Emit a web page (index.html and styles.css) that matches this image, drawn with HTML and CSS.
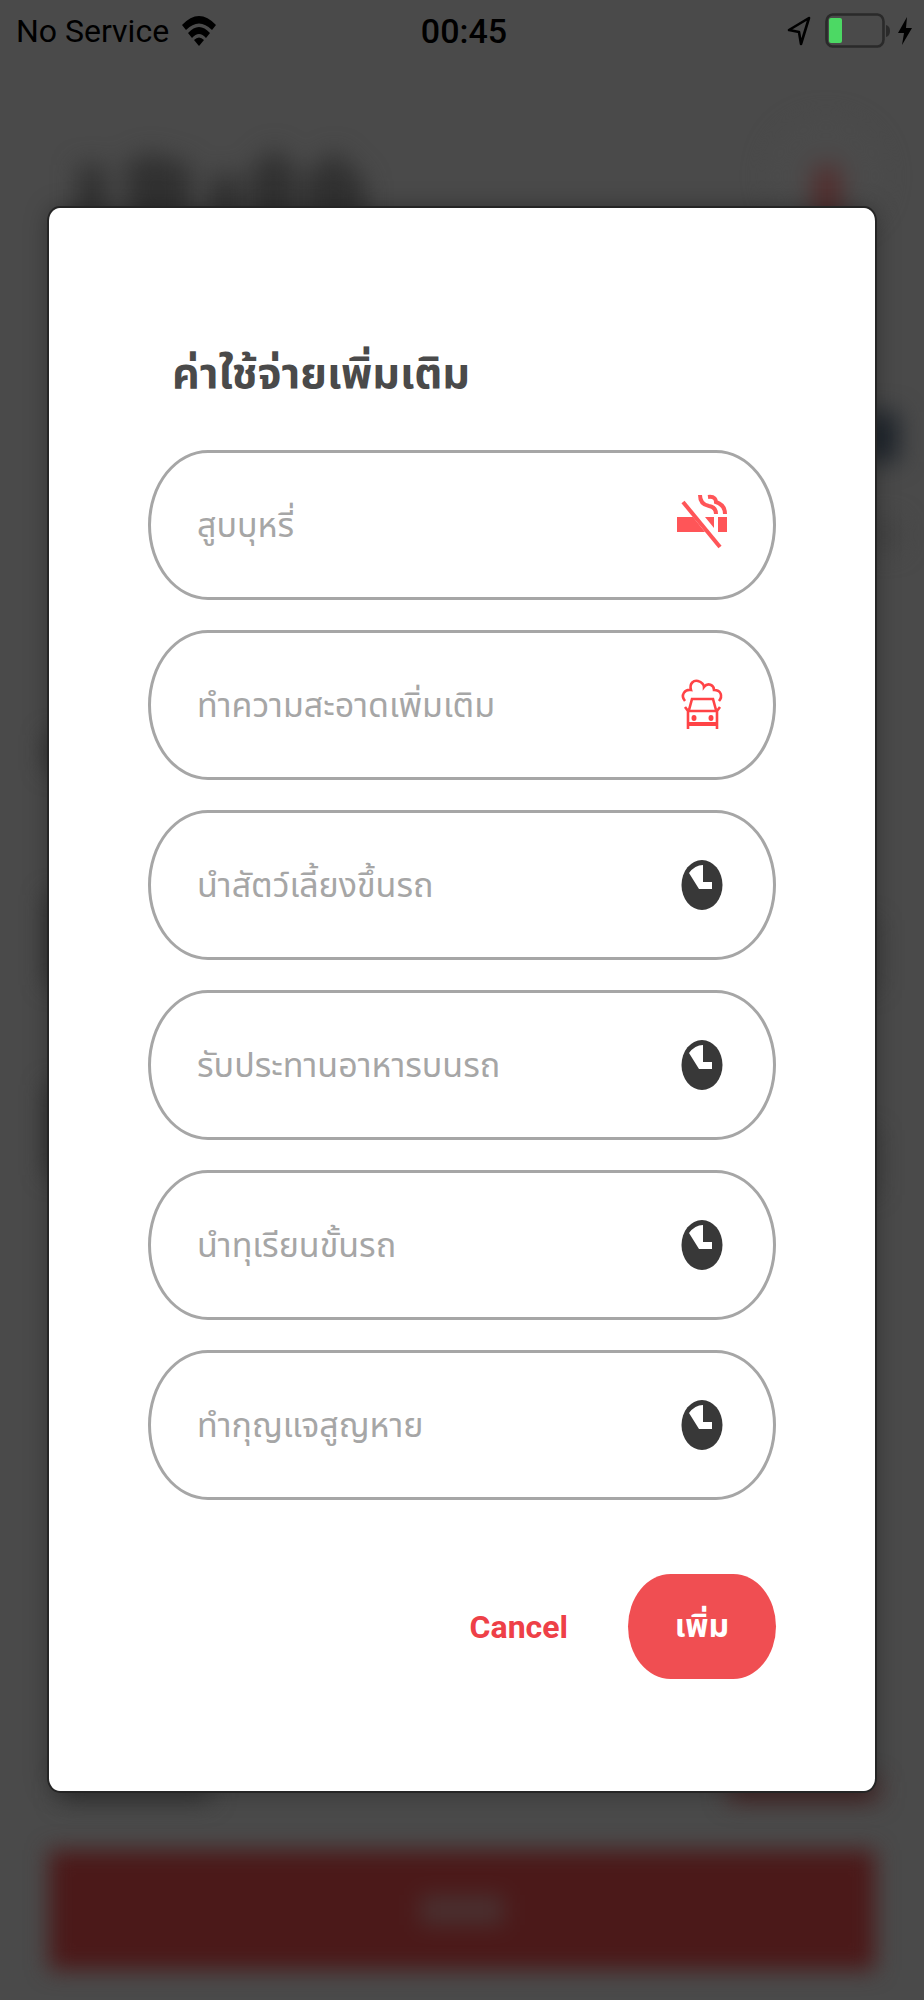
FILE: index.html
```html
<!DOCTYPE html>
<html lang="th">
<head>
<meta charset="utf-8">
<meta name="viewport" content="width=device-width, initial-scale=1">
<title>ค่าใช้จ่ายเพิ่มเติม</title>
<link rel="stylesheet" href="styles.css">
</head>
<body>
<div class="backdrop" aria-hidden="true">
  <svg class="smudges" viewBox="0 0 924 1800" preserveAspectRatio="none">
    <g fill="#313131">
      <path d="M78 165h28v60H78zM124 165l25-12 42 12v60h-60zM210 175h30v50h-30zM250 170l25-22 22 22v55h-47zM305 175l30-24 30 30v44h-60z"/>
      <path d="M47 735h20v35H47zM47 895h20v90H47zM47 1085h20v90H47z"/>
      <path d="M863 920h14v70h-14zM863 1130h14v65h-14z" opacity=".5"/>
      <path d="M60 1780h150v26H60z"/>
    </g>
    <circle cx="826" cy="176" r="58" fill="#4b4b4b"/>
    <rect x="814" y="166" width="26" height="60" fill="#532c2c"/>
    <rect x="862" y="412" width="37" height="50" fill="#1f252c"/>
    <rect x="870" y="520" width="30" height="30" fill="#434343"/>
    <path d="M728 1780h150v26H728z" fill="#451e1e"/>
  </svg>
  <div class="page-button"><span class="page-button-text"></span></div>
</div>

<div class="screen">
  <header class="status">
    <div class="status-left">
      <span>No Service</span>
      <svg class="wifi" viewBox="0 0 36 32">
        <path d="M1 10Q18-8 35 10L31 15Q18 2 5 15Z"/>
        <path d="M7 18Q18 6 29 18L25 23Q18 15 11 23Z"/>
        <path d="M13 25Q18 20 23 25L18 31Z"/>
      </svg>
    </div>
    <time class="clock">00:45</time>
    <div class="status-right">
      <svg class="locate" viewBox="0 0 24 30"><path d="M22 2L2 14L12 16L14 28Z" fill="none" stroke="#000" stroke-width="2.6" stroke-linejoin="round"/></svg>
      <svg class="battery" viewBox="0 0 66 36">
        <rect x="1.5" y="1.5" width="57" height="32" rx="6" ry="7" fill="none" stroke="#2a2a2a" stroke-width="2.6"/>
        <rect x="4" y="5" width="13" height="25" rx="2" fill="#4cd964"/>
        <path d="M61 12Q65 13 65 18Q65 23 61 24Z" fill="#2a2a2a"/>
      </svg>
      <svg class="bolt" viewBox="0 0 14 28"><path d="M9 0L0 16H6L4 28L14 11H8Z"/></svg>
    </div>
  </header>

  <main class="dialog" role="dialog" aria-labelledby="title">
    <h1 class="title" id="title">ค่าใช้จ่ายเพิ่มเติม</h1>
    <form class="form">
      <label class="field">
        <input class="input" type="text" aria-label="สูบบุหรี่" placeholder="สูบบุหรี่">
        <svg class="icon" viewBox="0 0 50 54">
          <g fill="#ff5558">
            <path d="M0 19H16L28 34H0ZM28 19H37V30ZM41 19H50V34H41Z"/>
          </g>
          <g fill="none" stroke="#ff5558" stroke-width="4">
            <path d="M6 4L43 49"/>
            <path d="M23-3C23 4 26 7 32 8Q39 9 39 16"/>
            <path d="M31-1C38-2 39 2 39 4Q48 7 48 16"/>
          </g>
        </svg>
      </label>
      <label class="field">
        <input class="input" type="text" aria-label="ทำความสะอาดเพิ่มเติม" placeholder="ทำความสะอาดเพิ่มเติม">
        <svg class="icon" viewBox="0 0 50 54">
          <g fill="none" stroke="#ff4346" stroke-width="2.6">
            <path d="M8 23C3 17 8 11 14 12C12 5 17 2 21 3C25 4 27 7 27 9C31 4 37 7 37 12C44 12 46 18 42 23"/>
            <path d="M12 32L15 21H36L39 32"/>
            <path d="M8 29L11 33H40L43 29M11 33V51M40 33V51"/>
            <path d="M11 46H40" stroke-width="4"/>
          </g>
          <g fill="#ff4346"><ellipse cx="17" cy="40" rx="2.5" ry="3"/><ellipse cx="34" cy="40" rx="2.5" ry="3"/></g>
        </svg>
      </label>
      <label class="field">
        <input class="input" type="text" aria-label="นำสัตว์เลี้ยงขึ้นรถ" placeholder="นำสัตว์เลี้ยงขึ้นรถ">
        <svg class="icon" viewBox="0 0 50 54"><ellipse cx="25" cy="27" rx="20.5" ry="25" fill="#383838"/><path d="M26 7V24H35V31H22L12 15Q18 7 26 7Z" fill="#fff"/></svg>
      </label>
      <label class="field">
        <input class="input" type="text" aria-label="รับประทานอาหารบนรถ" placeholder="รับประทานอาหารบนรถ">
        <svg class="icon" viewBox="0 0 50 54"><ellipse cx="25" cy="27" rx="20.5" ry="25" fill="#383838"/><path d="M26 7V24H35V31H22L12 15Q18 7 26 7Z" fill="#fff"/></svg>
      </label>
      <label class="field">
        <input class="input" type="text" aria-label="นำทุเรียนขั้นรถ" placeholder="นำทุเรียนขั้นรถ">
        <svg class="icon" viewBox="0 0 50 54"><ellipse cx="25" cy="27" rx="20.5" ry="25" fill="#383838"/><path d="M26 7V24H35V31H22L12 15Q18 7 26 7Z" fill="#fff"/></svg>
      </label>
      <label class="field">
        <input class="input" type="text" aria-label="ทำกุญแจสูญหาย" placeholder="ทำกุญแจสูญหาย">
        <svg class="icon" viewBox="0 0 50 54"><ellipse cx="25" cy="27" rx="20.5" ry="25" fill="#383838"/><path d="M26 7V24H35V31H22L12 15Q18 7 26 7Z" fill="#fff"/></svg>
      </label>
      <div class="actions">
        <button class="cancel" type="button">Cancel</button>
        <button class="submit" type="submit">เพิ่ม</button>
      </div>
    </form>
  </main>
</div>
</body>
</html>
```
FILE: styles.css
```css
* { box-sizing: border-box; }

body {
  margin: 0;
  min-height: 100vh;
  position: relative;
  overflow-x: hidden;
  background: #4a4a4a;
  font-family: Roboto, "Noto Sans", "Noto Sans Thai", sans-serif;
}

.backdrop {
  position: absolute;
  inset: 0;
  display: flex;
  flex-direction: column;
  padding-bottom: 30px;
  overflow: hidden;
}

.smudges {
  flex: 1;
  min-height: 0;
  width: 100%;
  filter: blur(12px);
}

.page-button {
  display: flex;
  align-items: center;
  justify-content: center;
  height: 120px;
  margin: 50px 49px 0;
  background: #4b1919;
  filter: blur(11px);
}

.page-button-text {
  width: 84px;
  height: 30px;
  background: #4a3030;
}

.screen {
  position: relative;
  display: flex;
  flex-direction: column;
}

.status {
  display: grid;
  grid-template-columns: 1fr auto 1fr;
  align-items: center;
  height: 62px;
  padding: 0 12px 0 16px;
  font-size: 32px;
  color: #000;
}

.status-left,
.status-right {
  display: flex;
  align-items: center;
}

.status-left { gap: 12px; }
.status-right { justify-content: flex-end; }
.clock { font-size: 34px; font-weight: 500; }
.wifi { width: 36px; height: 32px; }
.locate { width: 24px; height: 30px; margin-right: 14px; }
.battery { width: 66px; height: 36px; margin-right: 7px; }
.bolt { width: 14px; height: 28px; }

.dialog {
  margin: 146px 49px 0;
  padding: 130px 99px 112px;
  background: #fff;
  border-radius: 11px / 13px;
  box-shadow: 0 0 0 2px #252525, 0 0 24px rgba(0, 0, 0, .35);
}

.title {
  margin: 0 0 42px;
  padding-left: 24px;
  font-size: 43px;
  line-height: 70px;
  font-weight: 700;
  color: #4a4a4a;
}

.form {
  display: flex;
  flex-direction: column;
  gap: 30px;
}

.field {
  display: flex;
  align-items: center;
  height: 150px;
  padding: 0 46px;
  border: 3px solid #a6a6a6;
  border-radius: 60px / 75px;
}

.input {
  flex: 1;
  min-width: 0;
  height: 100%;
  padding: 0;
  border: 0;
  outline: 0;
  background: transparent;
  font: inherit;
  font-size: 34px;
  color: #4a4a4a;
}

.input::placeholder { color: #a6a6a6; opacity: 1; }

.icon {
  flex: none;
  width: 50px;
  height: 54px;
  overflow: visible;
}

.actions {
  display: flex;
  justify-content: flex-end;
  gap: 20px;
  padding-top: 44px;
}

.cancel,
.submit {
  height: 105px;
  border: 0;
  font: inherit;
  font-size: 32px;
  font-weight: 700;
}

.cancel {
  padding: 0 40px;
  background: transparent;
  color: #ee4047;
}

.submit {
  width: 148px;
  border-radius: 43px / 53px;
  background: #f04e52;
  color: #fff;
}
```
